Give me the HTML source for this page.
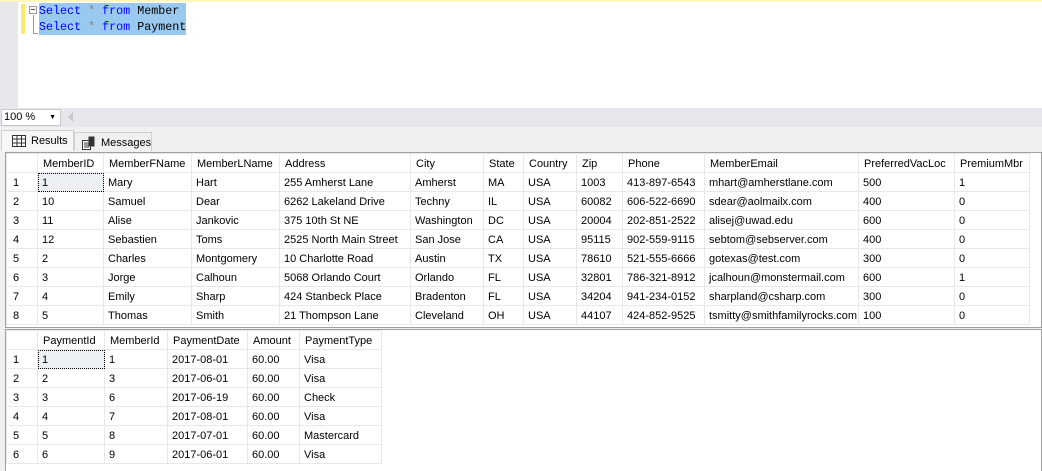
<!DOCTYPE html>
<html><head><meta charset="utf-8"><style>
*{margin:0;padding:0;box-sizing:border-box}
body{width:1042px;height:471px;overflow:hidden;background:#f0f0f0;position:relative;font-family:"Liberation Sans",sans-serif;font-size:11px;color:#000}
.ed{position:absolute;left:0;top:0;width:1042px;height:108px;background:#fff;border-top:2px solid #fff7c0}
.gut{position:absolute;left:0;top:0;width:18px;height:108px;background:#e8e8ec}
.code{position:absolute;font-family:"Liberation Mono",monospace;font-size:11.7px;line-height:16px;white-space:pre}
.sel{position:absolute;background:#99c9ef}
.k{color:#0000ff}.s{color:#808080}
.bar{position:absolute;left:0;top:108px;width:1042px;height:19px;background:#e6e7ed}
.zoom{position:absolute;left:1px;top:109px;width:60px;height:17px;background:#fff;border:1px solid #c8c8c8;font-size:11px;padding-left:2px;line-height:15px}
.tab{position:absolute;top:130px;height:21px;border:1px solid #d0d0d0;border-bottom:none;line-height:21px;padding-left:29px}
table{position:absolute;border-collapse:collapse;background:#fff;table-layout:fixed}
td{height:19px;border:1px solid #e8e8e8;padding-left:4px;padding-top:2px;white-space:nowrap;overflow:hidden;line-height:15px}
td.n{padding-left:6px}
tr.h td{padding-left:5px}
.wrap{position:absolute;left:5px;background:#fff;border:1px solid #a0a0a0}
td.f{outline:1px dotted #000;outline-offset:-1px;background:#eceff3}
</style></head><body>
<div class="ed">
<div class="gut"></div>
<div style="position:absolute;left:21px;top:2px;width:4px;height:30px;background:#fce96b"></div>
<div style="position:absolute;left:29px;top:4px;width:8px;height:8px;border:1px solid #999"></div>
<div style="position:absolute;left:31px;top:7px;width:4px;height:1px;background:#555"></div>
<div style="position:absolute;left:33px;top:13px;width:1px;height:18px;background:#999"></div>
<div style="position:absolute;left:33px;top:31px;width:5px;height:1px;background:#999"></div>
<div class="sel" style="left:39px;top:1px;width:147px;height:32px"></div>
<div class="code" style="left:39px;top:1px"><span class="k">Select</span> <span class="s">*</span> <span class="k">from</span> Member
<span class="k">Select</span> <span class="s">*</span> <span class="k">from</span> Payment</div>
</div>
<div class="bar"></div>
<div class="zoom">100 %<span style="position:absolute;right:4px;top:0;font-size:7px">▼</span></div>
<div style="position:absolute;left:68px;top:112px;width:0;height:0;border-top:5px solid transparent;border-bottom:5px solid transparent;border-right:5px solid #c8c8cc"></div>
<div class="tab" style="left:1px;width:73px;background:#f7f7f7">Results
<svg style="position:absolute;left:10px;top:4px" width="14" height="12"><rect x=".5" y=".5" width="13" height="11" fill="#fff" stroke="#333"/><path d="M.5 4h13M.5 8h13M5 .5v11M9.5 .5v11" stroke="#333"/></svg></div>
<div class="tab" style="left:74px;width:78px;top:132px;height:19px;line-height:20px;padding-left:26px">Messages
<svg style="position:absolute;left:6px;top:3px" width="16" height="14"><rect x="1.5" y="4.5" width="8" height="9" fill="#fff" stroke="#333"/><rect x="7.5" y=".5" width="6" height="10" fill="#333"/><path d="M3 7h5M3 9h5M3 11h5" stroke="#333"/></svg></div>
<div class="wrap" style="top:152px;width:1037px;height:176px"></div>
<table style="left:6px;top:153px;width:1023px">
<colgroup><col style="width:31px"><col style="width:66px"><col style="width:88px"><col style="width:88px"><col style="width:131px"><col style="width:73px"><col style="width:40px"><col style="width:53px"><col style="width:46px"><col style="width:82px"><col style="width:154px"><col style="width:96px"><col style="width:75px"></colgroup>
<tr class="h"><td></td><td>MemberID</td><td>MemberFName</td><td>MemberLName</td><td>Address</td><td>City</td><td>State</td><td>Country</td><td>Zip</td><td>Phone</td><td>MemberEmail</td><td>PreferredVacLoc</td><td>PremiumMbr</td></tr>
<tr><td class="n">1</td><td class="f">1</td><td>Mary</td><td>Hart</td><td>255 Amherst Lane</td><td>Amherst</td><td>MA</td><td>USA</td><td>1003</td><td>413-897-6543</td><td>mhart@amherstlane.com</td><td>500</td><td>1</td></tr>
<tr><td class="n">2</td><td>10</td><td>Samuel</td><td>Dear</td><td>6262 Lakeland Drive</td><td>Techny</td><td>IL</td><td>USA</td><td>60082</td><td>606-522-6690</td><td>sdear@aolmailx.com</td><td>400</td><td>0</td></tr>
<tr><td class="n">3</td><td>11</td><td>Alise</td><td>Jankovic</td><td>375 10th St NE</td><td>Washington</td><td>DC</td><td>USA</td><td>20004</td><td>202-851-2522</td><td>alisej@uwad.edu</td><td>600</td><td>0</td></tr>
<tr><td class="n">4</td><td>12</td><td>Sebastien</td><td>Toms</td><td>2525 North Main Street</td><td>San Jose</td><td>CA</td><td>USA</td><td>95115</td><td>902-559-9115</td><td>sebtom@sebserver.com</td><td>400</td><td>0</td></tr>
<tr><td class="n">5</td><td>2</td><td>Charles</td><td>Montgomery</td><td>10 Charlotte Road</td><td>Austin</td><td>TX</td><td>USA</td><td>78610</td><td>521-555-6666</td><td>gotexas@test.com</td><td>300</td><td>0</td></tr>
<tr><td class="n">6</td><td>3</td><td>Jorge</td><td>Calhoun</td><td>5068 Orlando Court</td><td>Orlando</td><td>FL</td><td>USA</td><td>32801</td><td>786-321-8912</td><td>jcalhoun@monstermail.com</td><td>600</td><td>1</td></tr>
<tr><td class="n">7</td><td>4</td><td>Emily</td><td>Sharp</td><td>424 Stanbeck Place</td><td>Bradenton</td><td>FL</td><td>USA</td><td>34204</td><td>941-234-0152</td><td>sharpland@csharp.com</td><td>300</td><td>0</td></tr>
<tr><td class="n">8</td><td>5</td><td>Thomas</td><td>Smith</td><td>21 Thompson Lane</td><td>Cleveland</td><td>OH</td><td>USA</td><td>44107</td><td>424-852-9525</td><td>tsmitty@smithfamilyrocks.com</td><td>100</td><td>0</td></tr>
</table>
<div class="wrap" style="top:329px;width:1037px;height:142px;border-bottom:none"></div>
<table style="left:6px;top:330px;width:375px">
<colgroup><col style="width:31px"><col style="width:67px"><col style="width:63px"><col style="width:80px"><col style="width:52px"><col style="width:82px"></colgroup>
<tr class="h"><td></td><td>PaymentId</td><td>MemberId</td><td>PaymentDate</td><td>Amount</td><td>PaymentType</td></tr>
<tr><td class="n">1</td><td class="f">1</td><td>1</td><td>2017-08-01</td><td>60.00</td><td>Visa</td></tr>
<tr><td class="n">2</td><td>2</td><td>3</td><td>2017-06-01</td><td>60.00</td><td>Visa</td></tr>
<tr><td class="n">3</td><td>3</td><td>6</td><td>2017-06-19</td><td>60.00</td><td>Check</td></tr>
<tr><td class="n">4</td><td>4</td><td>7</td><td>2017-08-01</td><td>60.00</td><td>Visa</td></tr>
<tr><td class="n">5</td><td>5</td><td>8</td><td>2017-07-01</td><td>60.00</td><td>Mastercard</td></tr>
<tr><td class="n">6</td><td>6</td><td>9</td><td>2017-06-01</td><td>60.00</td><td>Visa</td></tr>
</table>
</body></html>
